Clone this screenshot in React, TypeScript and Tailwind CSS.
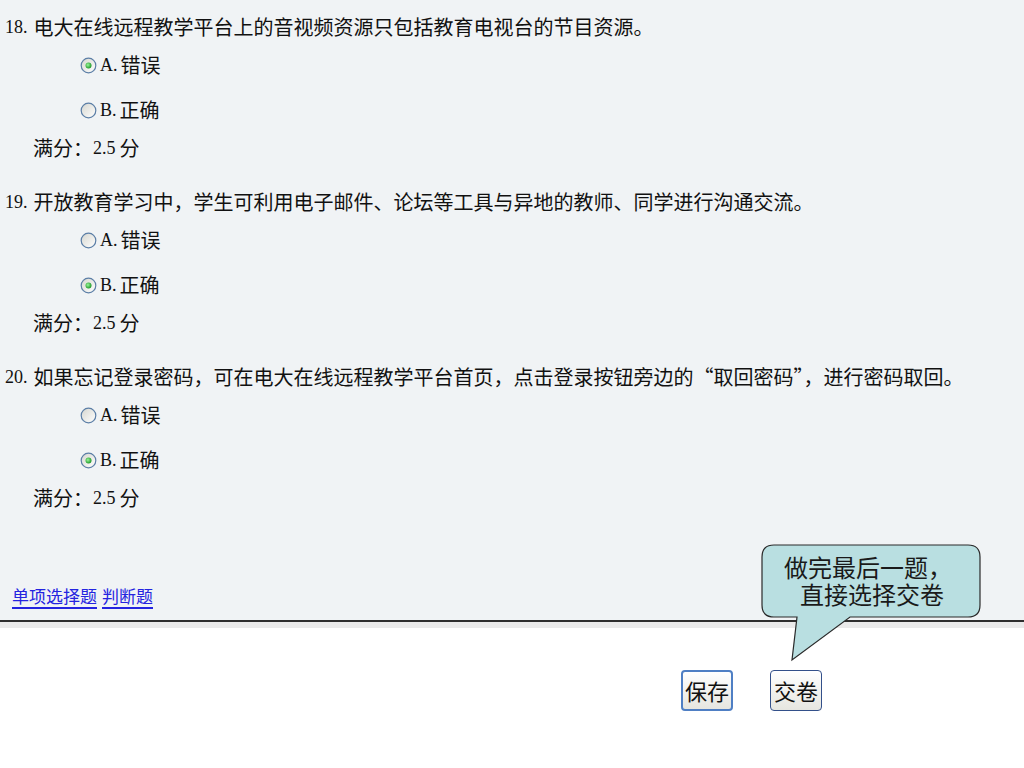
import React from 'react';

type Question = {
  no: number;
  text: string;
  answer: 'A' | 'B';
};

const questions: Question[] = [
  { no: 18, text: '电大在线远程教学平台上的音视频资源只包括教育电视台的节目资源。', answer: 'A' },
  { no: 19, text: '开放教育学习中，学生可利用电子邮件、论坛等工具与异地的教师、同学进行沟通交流。', answer: 'B' },
  { no: 20, text: '如果忘记登录密码，可在电大在线远程教学平台首页，点击登录按钮旁边的“取回密码”，进行密码取回。', answer: 'B' },
];

const cjk = { fontFamily: '"Noto Sans CJK SC", sans-serif' };
const serif = { fontFamily: '"Liberation Serif", serif' };

// little XP style radio button
function Radio({ checked }: { checked: boolean }) {
  return (
    <svg width="17" height="17" viewBox="0 0 17 17" className="shrink-0">
      <defs>
        <linearGradient id="rg" x1="0" y1="0" x2="1" y2="1">
          <stop offset="0" stopColor="#d6d6cf" />
          <stop offset="1" stopColor="#ffffff" />
        </linearGradient>
        <radialGradient id="dot" cx="0.4" cy="0.4" r="0.6">
          <stop offset="0" stopColor="#9af59a" />
          <stop offset="1" stopColor="#1f9a2a" />
        </radialGradient>
      </defs>
      <circle cx="8.5" cy="8.5" r="7.3" fill="url(#rg)" stroke="#5b7ea6" strokeWidth="1.2" />
      {checked && <circle cx="8.5" cy="8.5" r="3" fill="url(#dot)" />}
    </svg>
  );
}

function QuestionBlock({ q }: { q: Question }) {
  return (
    <div className="flex flex-col pb-[24px]">
      <div className="h-[30px] flex items-center pl-[5px] text-[20px] text-[#111]" style={cjk}>
        <span className="text-[18px] mr-[6px]" style={serif}>{q.no}.</span>
        {q.text}
      </div>
      <div className="mt-[8px] h-[30px] flex items-center pl-[80px] gap-[3px] text-[20px] text-[#111]">
        <Radio checked={q.answer === 'A'} />
        <span style={serif} className="text-[18px]">A.</span>
        <span style={cjk}>错误</span>
      </div>
      <div className="mt-[15px] h-[30px] flex items-center pl-[80px] gap-[3px] text-[20px] text-[#111]">
        <Radio checked={q.answer === 'B'} />
        <span style={serif} className="text-[18px]">B.</span>
        <span style={cjk}>正确</span>
      </div>
      <div className="mt-[8px] h-[30px] flex items-center pl-[33px] text-[20px] text-[#111]" style={cjk}>
        <span>满分：</span>
        <span className="text-[18px] mr-[4px]" style={serif}>2.5</span>
        <span>分</span>
      </div>
    </div>
  );
}

export default function App() {
  return (
    <div className="relative w-[1024px] h-[768px] bg-white overflow-hidden">
      {/* question area */}
      <div className="bg-[#f0f3f5] h-[620px] pt-[12px] flex flex-col">
        {questions.map((q) => (
          <QuestionBlock key={q.no} q={q} />
        ))}
        <div className="mt-[44px] h-[30px] flex items-center pl-[12px] gap-[5px] text-[17px]" style={cjk}>
          <a className="text-[#2424e0] underline underline-offset-[4px] decoration-2">单项选择题</a>
          <a className="text-[#2424e0] underline underline-offset-[4px] decoration-2">判断题</a>
        </div>
      </div>
      <div className="h-[2px] bg-[#2e2e2e]" />
      <div className="h-[6px] bg-[#eaeaea]" />

      {/* buttons */}
      <div className="flex pl-[681px] pt-[42px] gap-[37px]">
        <button
          className="w-[52px] h-[41px] rounded-[4px] border-2 border-[#4f7fc4] bg-gradient-to-b from-white to-[#e6e6e0] text-[22px] text-[#111] flex items-center justify-center"
          style={cjk}
        >
          保存
        </button>
        <button
          className="w-[52px] h-[41px] rounded-[4px] border border-[#33508a] bg-gradient-to-b from-white to-[#e6e6e0] text-[22px] text-[#111] flex items-center justify-center"
          style={cjk}
        >
          交卷
        </button>
      </div>

      {/* callout over the page */}
      <div className="absolute left-[760px] top-[543px] w-[224px] h-[120px]">
        <svg width="224" height="120" viewBox="0 0 224 120" className="absolute inset-0">
          <path
            d="M14 2 H208 Q220 2 220 14 V62 Q220 74 208 74 H90 L32 117 L37 74 H14 Q2 74 2 62 V14 Q2 2 14 2 Z"
            fill="#b9dfe1"
            stroke="#2a2a2a"
            strokeWidth="1.2"
          />
        </svg>
        <div
          className="relative flex flex-col items-center pt-[13px] text-[24px] leading-[27px] text-[#1a1a1a]"
          style={{ fontFamily: '"Liberation Serif", "Noto Sans CJK SC", serif', width: 218 }}
        >
          <span className="pr-[2px]">做完最后一题，</span>
          <span className="pl-[6px]">直接选择交卷</span>
        </div>
      </div>
    </div>
  );
}
